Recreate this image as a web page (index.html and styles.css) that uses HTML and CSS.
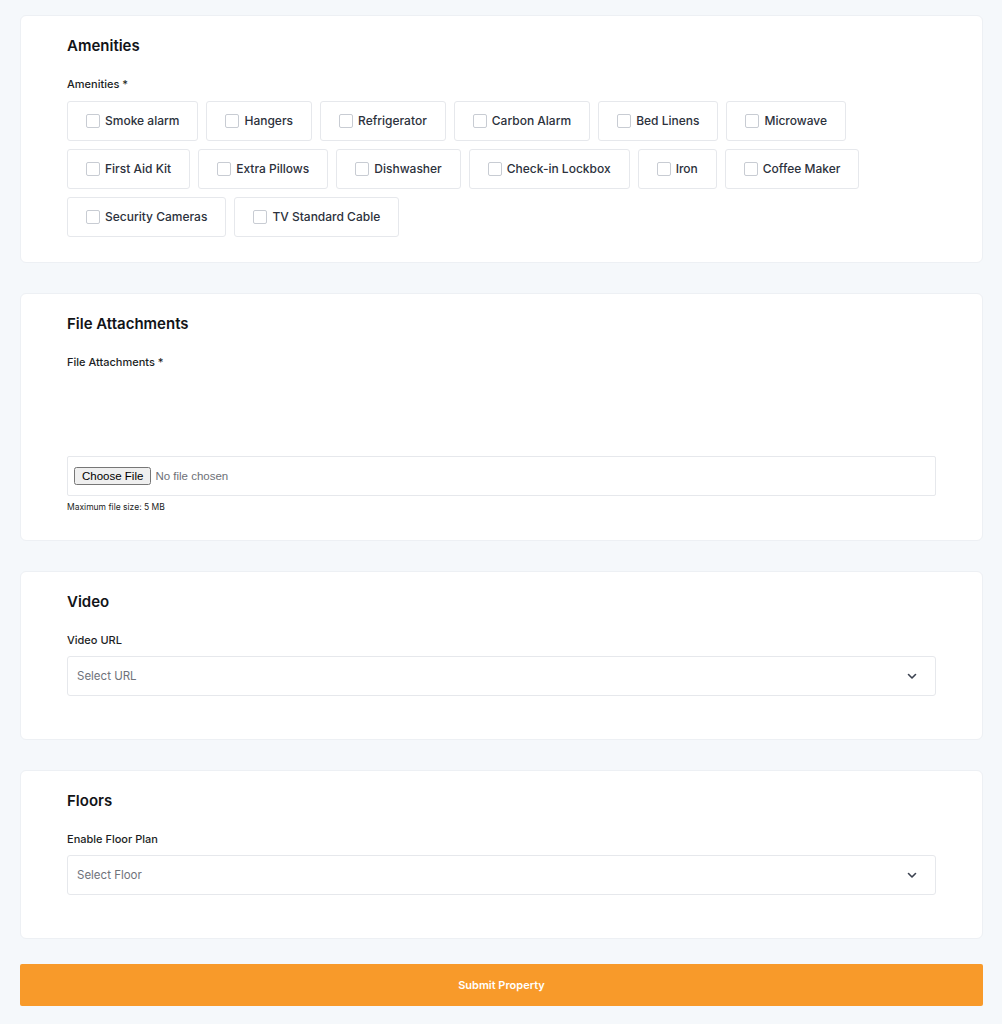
FILE: index.html
```html
<!DOCTYPE html>
<html lang="en">

<head>
    <meta charset="UTF-8">
    <title>Submit Property</title>
    <link rel="stylesheet" href="styles.css">
</head>

<body>
    <div class="form-wrap">
        <div class="form-card">
            <h3 class="card-title">Amenities</h3>
            <p class="field-label">Amenities *</p>
            <div class="check-list">
                <label class="check-item"><input type="checkbox"><span>Smoke alarm</span></label>
                <label class="check-item"><input type="checkbox"><span>Hangers</span></label>
                <label class="check-item"><input type="checkbox"><span>Refrigerator</span></label>
                <label class="check-item"><input type="checkbox"><span>Carbon Alarm</span></label>
                <label class="check-item"><input type="checkbox"><span>Bed Linens</span></label>
                <label class="check-item"><input type="checkbox"><span>Microwave</span></label>
                <label class="check-item"><input type="checkbox"><span>First Aid Kit</span></label>
                <label class="check-item"><input type="checkbox"><span>Extra Pillows</span></label>
                <label class="check-item"><input type="checkbox"><span>Dishwasher</span></label>
                <label class="check-item"><input type="checkbox"><span>Check-in Lockbox</span></label>
                <label class="check-item"><input type="checkbox"><span>Iron</span></label>
                <label class="check-item"><input type="checkbox"><span>Coffee Maker</span></label>
                <label class="check-item"><input type="checkbox"><span>Security Cameras</span></label>
                <label class="check-item"><input type="checkbox"><span>TV Standard Cable</span></label>
            </div>
        </div>

        <div class="form-card">
            <h3 class="card-title">File Attachments</h3>
            <p class="field-label">File Attachments *</p>
            <div class="file-box">
                <input type="file">
            </div>
            <p class="help-text">Maximum file size: 5 MB</p>
        </div>

        <div class="form-card">
            <h3 class="card-title">Video</h3>
            <p class="field-label">Video URL</p>
            <div class="select-box">
                <span>Select URL</span>
                <svg width="12" height="12" viewBox="0 0 12 12"><path d="M2.5 4.5 6 8l3.5-3.5" fill="none" stroke="#3c4250" stroke-width="1.6" stroke-linecap="round" stroke-linejoin="round"/></svg>
            </div>
        </div>

        <div class="form-card">
            <h3 class="card-title">Floors</h3>
            <p class="field-label">Enable Floor Plan</p>
            <div class="select-box">
                <span>Select Floor</span>
                <svg width="12" height="12" viewBox="0 0 12 12"><path d="M2.5 4.5 6 8l3.5-3.5" fill="none" stroke="#3c4250" stroke-width="1.6" stroke-linecap="round" stroke-linejoin="round"/></svg>
            </div>
        </div>

        <button class="submit-btn">Submit Property</button>
    </div>
</body>

</html>
```

FILE: styles.css
```css
body {
    font-family: Inter, "Open Sans", sans-serif;
    margin: 0;
    padding: 15px 0 19px;
    background-color: #f5f8fb;
    color: #14161b;
}

.form-wrap {
    margin: 0 19px 0 20px;
    display: flex;
    flex-direction: column;
    gap: 30px;
}

.form-card {
    background: #fff;
    border: 1px solid #edf0f4;
    border-radius: 6px;
    padding: 20px 46px 25px 46px;
}

.card-title {
    margin: 0 0 20px;
    font-size: 15px;
    line-height: 20px;
    font-weight: 600;
    color: #121418;
}

.field-label {
    margin: 0 0 8px;
    font-size: 11px;
    line-height: 16px;
    font-weight: 500;
    color: #1b1e24;
}

.check-list {
    display: flex;
    flex-wrap: wrap;
    gap: 8px 8px;
    padding-top: 1px;
}

.check-item {
    display: flex;
    align-items: center;
    gap: 5px;
    height: 38px;
    padding: 0 18px;
    border: 1px solid #e6e8ec;
    border-radius: 3px;
    font-size: 12px;
    font-weight: 500;
    color: #2c313c;
    cursor: pointer;
}

.check-item span {
    margin-top: -1px;
}

.check-item input {
    appearance: none;
    width: 14px;
    height: 14px;
    margin: 0;
    border: 1px solid #c8ccd3;
    border-radius: 2px;
    background: #fff;
}

.file-box {
    margin-top: 86px;
    height: 38px;
    border: 1px solid #e6e8ec;
    border-radius: 2px;
    display: flex;
    align-items: center;
    padding: 0 6px;
}

.file-box input {
    font-family: "Liberation Sans", Arial, sans-serif;
    font-size: 11.5px;
    color: #6d7077;
}

.help-text {
    margin: 5px 0 2px;
    font-size: 8.5px;
    line-height: 12px;
    color: #1b1e24;
}

.select-box {
    height: 38px;
    margin-bottom: 18px;
    border: 1px solid #e6e8ec;
    border-radius: 3px;
    display: flex;
    align-items: center;
    justify-content: space-between;
    padding: 0 17px 0 9px;
    font-size: 11.5px;
    color: #6f737b;
}

.submit-btn {
    height: 42px;
    margin-top: -5px;
    border: none;
    border-radius: 2px;
    background-color: #f89a2a;
    color: #fff;
    font-family: Inter, sans-serif;
    font-size: 11px;
    font-weight: 600;
    cursor: pointer;
}
```
